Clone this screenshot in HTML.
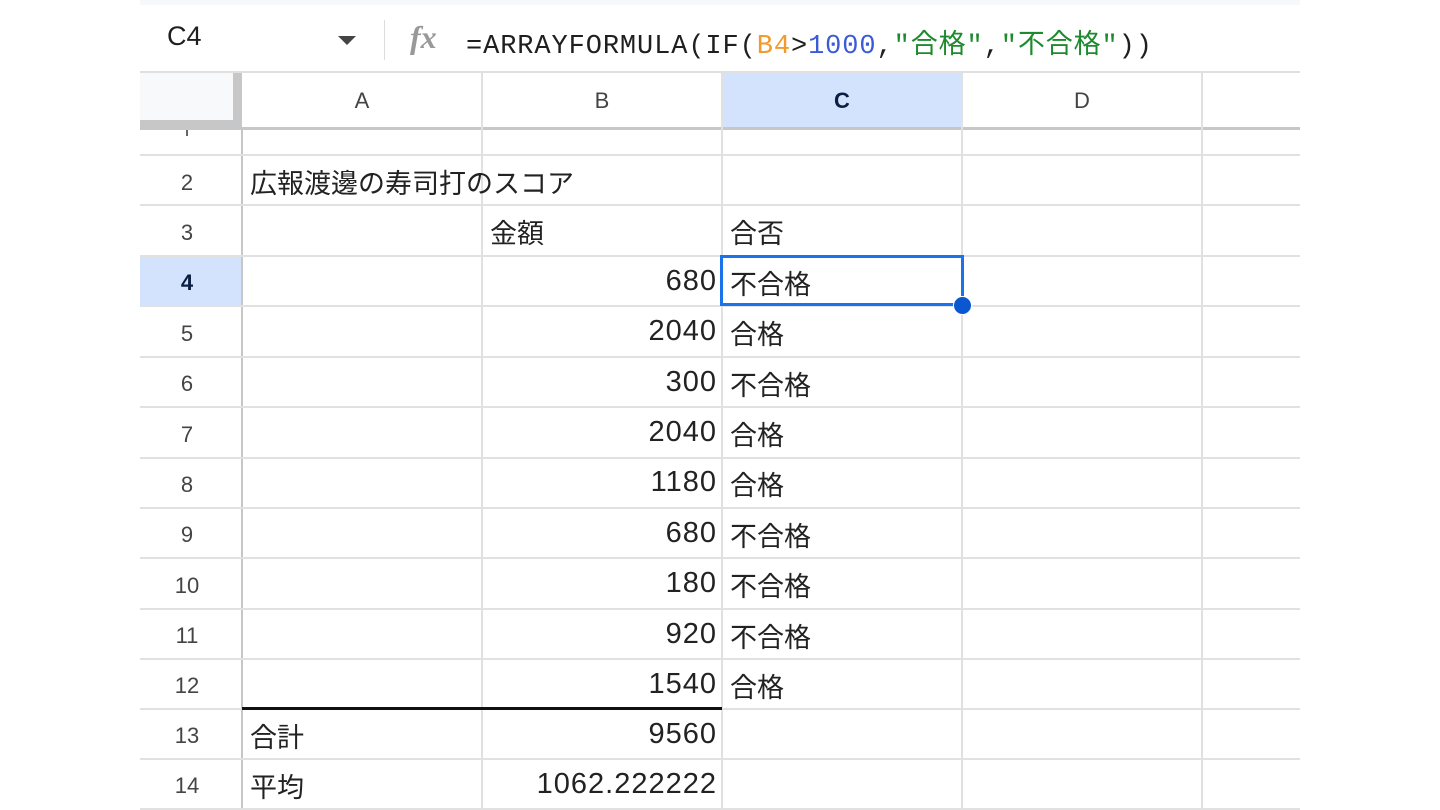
<!DOCTYPE html>
<html><head><meta charset="utf-8"><style>
body{margin:0;width:1440px;height:810px;background:#fff;position:relative;overflow:hidden;font-family:"Liberation Sans","Noto Sans CJK JP",sans-serif;color:#222}
div{position:absolute;box-sizing:border-box}
.t{white-space:nowrap}
.j{font-size:27px;margin-top:-3px}
.n{font-size:29px;letter-spacing:1px;margin-top:-1px}
.r{font-size:22px;color:#444}
</style></head><body>
<div style="left:140px;top:0;width:1160px;height:5px;background:#f6f8fb"></div>
<div class="t" style="left:167px;top:21px;font-size:27px;color:#1f1f1f">C4</div>
<div style="left:338px;top:36px;width:0;height:0;border-left:9px solid transparent;border-right:9px solid transparent;border-top:9px solid #444"></div>
<div style="left:384px;top:20px;width:1px;height:40px;background:#dadce0"></div>
<div class="t" style="left:410px;top:19px;font-size:32px;font-family:'Liberation Serif',serif;font-style:italic;font-weight:bold;color:#999">fx</div>
<div class="t" style="left:466px;top:22px;font-size:27px;letter-spacing:0.9px;font-family:'Liberation Mono','Noto Sans CJK JP',monospace;color:#1f1f1f">=ARRAYFORMULA(IF(<span style="color:#f29a2e">B4</span>&gt;<span style="color:#3b5bd6">1000</span>,<span style="color:#1e8a2e">"合格"</span>,<span style="color:#1e8a2e">"不合格"</span>))</div>
<div style="left:140px;top:71px;width:1160px;height:2px;background:#e0e0e0"></div>
<div style="left:140px;top:73px;width:93px;height:47px;background:#f8f9fa"></div>
<div style="left:233px;top:73px;width:9px;height:57px;background:#c7c7c7"></div>
<div style="left:140px;top:120px;width:102px;height:10px;background:#c7c7c7"></div>
<div style="left:722px;top:73px;width:240px;height:56px;background:#d3e3fd"></div>
<div style="left:242px;top:127px;width:1058px;height:3px;background:#c7c7c7"></div>
<div class="t r" style="left:242px;top:88px;width:240px;text-align:center">A</div>
<div class="t r" style="left:482px;top:88px;width:240px;text-align:center">B</div>
<div class="t" style="left:722px;top:88px;width:240px;text-align:center;font-size:22px;color:#0b1f44;font-weight:bold">C</div>
<div class="t r" style="left:962px;top:88px;width:240px;text-align:center">D</div>
<div style="left:481px;top:73px;width:2px;height:737px;background:#e1e1e1"></div>
<div style="left:721px;top:73px;width:2px;height:737px;background:#e1e1e1"></div>
<div style="left:961px;top:73px;width:2px;height:737px;background:#e1e1e1"></div>
<div style="left:1201px;top:73px;width:2px;height:737px;background:#e1e1e1"></div>
<div style="left:241px;top:130px;width:2px;height:680px;background:#c7c7c7"></div>
<div style="left:186px;top:130px;width:2px;height:6px;background:#666"></div>
<div style="left:140px;top:154px;width:1160px;height:2px;background:#e1e1e1"></div>
<div style="left:140px;top:204px;width:1160px;height:2px;background:#e1e1e1"></div>
<div style="left:140px;top:255px;width:1160px;height:2px;background:#e1e1e1"></div>
<div style="left:140px;top:305px;width:1160px;height:2px;background:#e1e1e1"></div>
<div style="left:140px;top:356px;width:1160px;height:2px;background:#e1e1e1"></div>
<div style="left:140px;top:406px;width:1160px;height:2px;background:#e1e1e1"></div>
<div style="left:140px;top:457px;width:1160px;height:2px;background:#e1e1e1"></div>
<div style="left:140px;top:507px;width:1160px;height:2px;background:#e1e1e1"></div>
<div style="left:140px;top:557px;width:1160px;height:2px;background:#e1e1e1"></div>
<div style="left:140px;top:608px;width:1160px;height:2px;background:#e1e1e1"></div>
<div style="left:140px;top:658px;width:1160px;height:2px;background:#e1e1e1"></div>
<div style="left:140px;top:708px;width:1160px;height:2px;background:#e1e1e1"></div>
<div style="left:140px;top:758px;width:1160px;height:2px;background:#e1e1e1"></div>
<div style="left:140px;top:808px;width:1160px;height:2px;background:#e1e1e1"></div>
<div style="left:242px;top:707px;width:480px;height:3px;background:#111"></div>
<div style="left:140px;top:257px;width:101px;height:48px;background:#d3e3fd"></div>
<div class="t r" style="left:140px;top:170px;width:94px;text-align:center">2</div>
<div class="t r" style="left:140px;top:220px;width:94px;text-align:center">3</div>
<div class="t" style="left:140px;top:270px;width:94px;text-align:center;font-size:22px;color:#0b1f44;font-weight:bold">4</div>
<div class="t r" style="left:140px;top:321px;width:94px;text-align:center">5</div>
<div class="t r" style="left:140px;top:371px;width:94px;text-align:center">6</div>
<div class="t r" style="left:140px;top:422px;width:94px;text-align:center">7</div>
<div class="t r" style="left:140px;top:472px;width:94px;text-align:center">8</div>
<div class="t r" style="left:140px;top:522px;width:94px;text-align:center">9</div>
<div class="t r" style="left:140px;top:573px;width:94px;text-align:center">10</div>
<div class="t r" style="left:140px;top:623px;width:94px;text-align:center">11</div>
<div class="t r" style="left:140px;top:673px;width:94px;text-align:center">12</div>
<div class="t r" style="left:140px;top:723px;width:94px;text-align:center">13</div>
<div class="t r" style="left:140px;top:773px;width:94px;text-align:center">14</div>
<div class="t j" style="left:250px;top:165px">広報渡邊の寿司打のスコア</div>
<div class="t j" style="left:490px;top:215px">金額</div>
<div class="t j" style="left:730px;top:215px">合否</div>
<div class="t j" style="left:250px;top:719px">合計</div>
<div class="t j" style="left:250px;top:769px">平均</div>
<div class="t n" style="left:482px;top:266px;width:235px;text-align:right">680</div>
<div class="t n" style="left:482px;top:316px;width:235px;text-align:right">2040</div>
<div class="t n" style="left:482px;top:367px;width:235px;text-align:right">300</div>
<div class="t n" style="left:482px;top:417px;width:235px;text-align:right">2040</div>
<div class="t n" style="left:482px;top:467px;width:235px;text-align:right">1180</div>
<div class="t n" style="left:482px;top:518px;width:235px;text-align:right">680</div>
<div class="t n" style="left:482px;top:568px;width:235px;text-align:right">180</div>
<div class="t n" style="left:482px;top:619px;width:235px;text-align:right">920</div>
<div class="t n" style="left:482px;top:669px;width:235px;text-align:right">1540</div>
<div class="t n" style="left:482px;top:719px;width:235px;text-align:right">9560</div>
<div class="t n" style="left:482px;top:769px;width:235px;text-align:right">1062.222222</div>
<div class="t j" style="left:730px;top:266px">不合格</div>
<div class="t j" style="left:730px;top:316px">合格</div>
<div class="t j" style="left:730px;top:367px">不合格</div>
<div class="t j" style="left:730px;top:417px">合格</div>
<div class="t j" style="left:730px;top:467px">合格</div>
<div class="t j" style="left:730px;top:518px">不合格</div>
<div class="t j" style="left:730px;top:568px">不合格</div>
<div class="t j" style="left:730px;top:619px">不合格</div>
<div class="t j" style="left:730px;top:669px">合格</div>
<div style="left:720px;top:255px;width:244px;height:51px;border:3px solid #1a73e8"></div>
<div style="left:953px;top:296px;width:19px;height:19px;border-radius:50%;background:#0b57d0;border:1px solid #fff"></div>
</body></html>
